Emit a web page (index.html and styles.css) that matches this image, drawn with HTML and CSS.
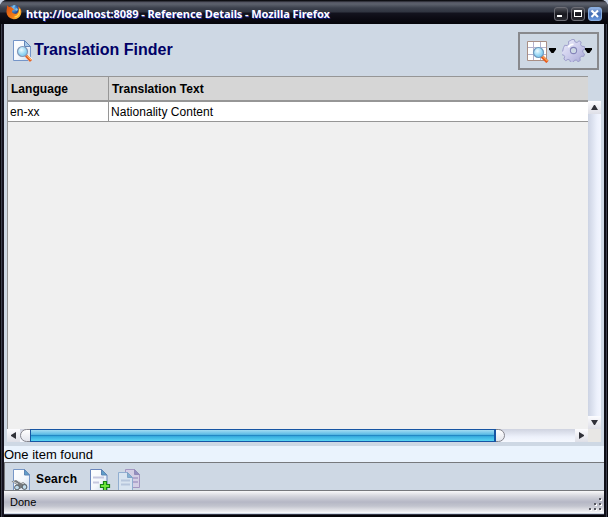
FILE: index.html
```html
<!DOCTYPE html>
<html lang="en">
<head>
<meta charset="utf-8">
<title>Reference Details</title>
<link rel="stylesheet" href="styles.css">
</head>
<body>
<svg class="defs" width="0" height="0" aria-hidden="true">
  <defs>
    <linearGradient id="paper" x1="0" y1="0" x2="1" y2="1"><stop offset="0" stop-color="#fff"/><stop offset=".55" stop-color="#f4f7fc"/><stop offset="1" stop-color="#c9d9ee"/></linearGradient>
    <linearGradient id="gear" x1="0" y1="0" x2="1" y2="1"><stop offset="0" stop-color="#f0f0fc"/><stop offset=".5" stop-color="#cdcdec"/><stop offset="1" stop-color="#a6a6d4"/></linearGradient>
    <radialGradient id="lens" cx=".4" cy=".35"><stop offset="0" stop-color="#f0fcff"/><stop offset="1" stop-color="#8ad2f4"/></radialGradient>
    <radialGradient id="globe" cx=".4" cy=".3"><stop offset="0" stop-color="#7cc4f4"/><stop offset="1" stop-color="#123c8c"/></radialGradient>
    <linearGradient id="fox" x1="0" y1="0" x2="1" y2="1"><stop offset="0" stop-color="#d84c10"/><stop offset=".6" stop-color="#f07c18"/><stop offset="1" stop-color="#ffd840"/></linearGradient>
  </defs>
</svg>
<div class="window">
  <header class="titlebar">
    <svg class="firefox" viewBox="0 0 16 16">
      <circle cx="8.3" cy="7" r="6" fill="url(#globe)"/>
      <path d="M7 1.5 9.5 1 8.5 3 6.5 4ZM10 4l2 1-1 2-2-1Z" fill="#7cc0e8"/>
      <path d="M1 1.200 3 3 5 2.700 6.300 4 8.400 5.200 6.200 6.500 6 8.100C7 10 9.500 10.400 11.300 9 13 7.400 13 4 11.800 2.300 15 4 16 7.400 15 10.200 13.700 13.800 10.700 15.400 7.600 15.200 3.200 14.800.5 11.500.5 7.800.5 5 1.300 3.800 1 1.200Z" fill="url(#fox)"/>
      <path d="M13.500 5C14.500 9 12 12.500 8.500 13" fill="none" stroke="#ffdc50" stroke-width="1.200"/>
    </svg>
    <h1 class="caption">http://localhost:8089 - Reference Details - Mozilla Firefox</h1>
    <div class="controls">
      <span class="control"><svg viewBox="0 0 14 14"><path d="M3 8h5v2H3z" fill="#fff"/></svg></span>
      <span class="control"><svg viewBox="0 0 14 14"><path d="M3 3h8v7H3zM4 5v4h6V5z" fill="#fff" fill-rule="evenodd"/></svg></span>
      <span class="control close"><svg viewBox="0 0 14 14"><path d="m3.500 3.500 6.500 6.500M10 3.500 3.500 10" stroke="#fff" stroke-width="2.100"/></svg></span>
    </div>
  </header>
  <main class="page">
    <section class="heading">
      <svg class="finder" viewBox="0 0 22 24">
        <path d="M1.500 1.500h11l6 6v14h-17Z" fill="url(#paper)" stroke="#7595c8"/>
        <path d="M12.500 1.500v6h6Z" fill="#a9cbe9" stroke="#6587b8"/>
        <path d="m14 16 5 5.500" stroke="#fff" stroke-width="4"/>
        <path d="m14 16.500 5 5.500" stroke="#e46428" stroke-width="3"/>
        <path d="m15 16.500 4 4.400" stroke="#ffd27c"/>
        <circle cx="10.500" cy="12.500" r="5" fill="url(#lens)" stroke="#8297b8" stroke-width="1.200"/>
      </svg>
      <h2 class="title">Translation Finder</h2>
      <div class="tools">
        <svg class="grid-icon" viewBox="0 0 22 22">
          <path d="M.5.500h19v19H.500Z" fill="#fff" stroke="#a98f85"/>
          <path d="M6.500 1v18M13.500 1v18M1 6.500h18M1 13.500h18" stroke="#b4b2cd"/>
          <path d="m14.500 15 6 6" stroke="#e85e20" stroke-width="3.200"/>
          <path d="m15.500 15 5 5" stroke="#ffd27c"/>
          <circle cx="11.500" cy="11.500" r="5" fill="url(#lens)" stroke="#6d99bd" stroke-width="1.200"/>
        </svg>
        <svg class="arrow" viewBox="0 0 7 5"><path d="M0 0h7v1.500L4.500 5h-2L0 1.500Z"/></svg>
        <svg class="gear-icon" viewBox="0 0 22 22">
          <path d="m9.500.5 2.200 0 .8 2.300 1.900.5 1.900-1.600 2 1.300-.5 2.400 1.200 1.600 2.400.2.600 2.300-2.100 1.300-.1 1.900 1.800 1.700-.8 2.200-2.500 0-1.200 1.500.4 2.400-2.100 1.200-1.800-1.600-1.900.4-1.200 2.200-2.200-.2-.8-2.300-1.800-.7-2.100 1.200-1.800-1.500.8-2.300-1.100-1.600-2.500-.4-.3-2.300 2.100-1.200.3-1.900L1.600 8l1-2 2.400.3 1.400-1.500-.2-2.400 2.100-1Z" fill="url(#gear)" stroke="#9393c4" stroke-width=".8"/>
          <circle cx="11" cy="11" r="3" fill="#cdd8e4" stroke="#8484b8"/>
          <path d="M6 8c1-2.200 3-3 5-3" fill="none" stroke="#fff" stroke-width="1.500"/>
        </svg>
        <svg class="arrow" viewBox="0 0 7 5"><path d="M0 0h7v1.500L4.500 5h-2L0 1.500Z"/></svg>
      </div>
    </section>
    <section class="results">
      <div class="listing">
        <div class="row head"><div class="cell">Language</div><div class="cell">Translation Text</div></div>
        <div class="row"><div class="cell">en-xx</div><div class="cell">Nationality Content</div></div>
      </div>
      <div class="vscroll">
        <span class="vbutton"><svg viewBox="0 0 7 5"><path d="M3 0h1l3 5H0Z"/></svg></span>
        <span class="vbutton"><svg viewBox="0 0 7 5"><path d="M0 0h7L4 5H3Z"/></svg></span>
      </div>
      <div class="hscroll">
        <span class="hbutton"><svg viewBox="0 0 5 7"><path d="M0 3v1l5 3V0Z"/></svg></span>
        <span class="thumb"><span class="fill"></span></span>
        <span class="hbutton end"><svg viewBox="0 0 5 7"><path d="M0 0v7l5-3V3Z"/></svg></span>
      </div>
      <div class="corner"></div>
    </section>
    <p class="count">One item found</p>
    <nav class="actions">
      <svg class="search-icon" viewBox="0 0 22 22">
        <path d="M2.500.5h11l5 5.500v15.500h-16Z" fill="url(#paper)" stroke="#7797c8"/>
        <path d="M13.500.5V6h5Z" fill="#5f9fc9" stroke="#5d83b4"/>
        <path d="M.5 12.500 5 11l5 3 2-1 4 3-1 4-4-1-3 1-2-4Z" fill="#777b7e"/>
        <path d="m2 12.500 5 2.500M7 12l6 3" stroke="#d9dcdf"/>
        <circle cx="6" cy="18.500" r="2.400" fill="#c0dced" stroke="#555b60"/>
        <circle cx="13.500" cy="18" r="2.400" fill="#c0dced" stroke="#555b60"/>
      </svg>
      <span class="search">Search</span>
      <svg class="add-icon" viewBox="0 0 22 22">
        <path d="M1.500.5h11l5.500 5.500v15.500H1.500Z" fill="url(#paper)" stroke="#6985bc"/>
        <path d="M12.500.5V6h5.500Z" fill="#5f9fc9" stroke="#5d83b4"/>
        <path d="M4 8.500h11M4 13.500h6" stroke="#c6c8df" stroke-width="2"/>
        <path d="M14.500 12.500h3v3h3v3h-3v3h-3v-3h-3v-3h3Z" fill="#6ee83c" stroke="#168216" stroke-width="1.200"/>
      </svg>
      <svg class="copy-icon" viewBox="0 0 23 22">
        <g opacity=".75"><path d="M7.500.5h9l5 5v13h-14Z" fill="#d6cce6" stroke="#9681b7"/><path d="M16.500.5v5h5Z" fill="#7d78b4" stroke="#8172ab"/><path d="M15 9h5m-5 4h5" stroke="#a897c6" stroke-width="2"/></g>
        <path d="M.5 3.500h9l5 5v13H.5Z" fill="#d8e4f0" stroke="#91aed0"/><path d="M9.500 3.500v5h5Z" fill="#84b2d2" stroke="#80a4c8"/><path d="M3 11.500h9M3 15.500h9" stroke="#b6c6dc" stroke-width="2"/>
      </svg>
    </nav>
    <footer class="status"><span>Done</span>
      <svg class="grip" viewBox="0 0 14 14"><path d="M12 2h2v2h-2zM7 7h2v2H7zM12 7h2v2h-2zM2 12h2v2H2zM7 12h2v2H7zM12 12h2v2h-2z" fill="#fff"/><path d="M11 1h2v2h-2zM6 6h2v2H6zM11 6h2v2h-2zM1 11h2v2H1zM6 11h2v2H6zM11 11h2v2h-2z" fill="#55565f"/></svg>
    </footer>
  </main>
</div>
</body>
</html>
```
FILE: styles.css
```css
* { box-sizing: border-box; }
body { margin: 0; background: #c3cee0; font-family: "Liberation Sans", Arial, sans-serif; color: #000; overflow: hidden; }
h1, h2, p { margin: 0; }
svg { display: block; flex: none; }
.defs { position: absolute; }
.window { width: 608px; height: 517px; display: grid; grid-template-rows: 24px 1fr; padding: 0 4px 3px; border-radius: 7px 7px 0 0; background: linear-gradient(90deg, #050509 0 1px, #3c3e4c 1px 2px, #15131f 2px 4px, transparent 4px calc(100% - 4px), #101018 calc(100% - 4px) calc(100% - 2px), #3c3e4c calc(100% - 2px) calc(100% - 1px), #050509 calc(100% - 1px)), linear-gradient(#12121c 514px, #343545 514px 515px, #050509 515px); }
.titlebar { display: flex; margin: 0 -4px; padding: 0 6px; border-radius: 7px 7px 0 0; background: linear-gradient(#08080c 0, #15161b 1px, #50525f 2px, #5d626d 4px, #3c414d 8px, #303440 12px, #13131e 13px, #0c0b14 18px, #05050a 24px); }
.firefox { width: 16px; height: 16px; margin-top: 4px; }
.caption { margin: 6px 0 0 4px; flex: 1; font: bold 11px/16px "Noto Sans", sans-serif; letter-spacing: -.08px; color: #fff; text-shadow: 1px 1px #1624a0; white-space: nowrap; }
.controls { display: flex; gap: 3px; margin: 7px 0 0; }
.control { width: 14px; height: 14px; border: 1px solid #6c6c74; border-radius: 3px; background: linear-gradient(#50525a, #18181f 50%, #292930); }
.control svg { width: 14px; height: 14px; margin: -1px; }
.close { border-color: #8aaee0; background: linear-gradient(#94b4e4, #4069b0 50%, #6d9be0); }
.page { display: grid; grid-template-rows: 52px 370px 16px 29px 22px; min-width: 0; background: #ced8e4; }
.heading { display: flex; padding: 0 5px 0 8px; }
.finder { width: 22px; height: 24px; margin-top: 15px; }
.title { flex: 1; margin: 17px 0 0; color: #000066; font-size: 16px; line-height: 18px; letter-spacing: 0; }
.tools { display: flex; width: 81px; height: 38px; margin-top: 8px; padding-left: 7px; border: 2px solid #88898d; }
.grid-icon { width: 22px; height: 22px; margin: 7px 0 0; }
.gear-icon { width: 23px; height: 23px; margin: 5px 0 0 6px; }
.arrow { width: 7px; height: 5px; margin: 14px 0 0; }
.results { display: grid; grid-template: 353px 13px / 581px 13px; padding-left: 3px; }
.listing { grid-area: 1 / 1; background: #f0f0f0; border-left: 1px solid #969696; }
.row { display: grid; grid-template-columns: 100px 1fr; height: 20px; font-size: 12px; line-height: 20px; background: #fff; border-bottom: 1px solid #969696; }
.cell { padding-left: 2px; white-space: nowrap; letter-spacing: .04px; }
.cell + .cell { border-left: 1px solid #969696; }
.head { height: 26px; line-height: 24px; font-weight: bold; background: #d6d6d6; border-top: 1px solid #969696; border-bottom: 2px solid #969696; }
.head .cell { padding-left: 3px; }
.vscroll { grid-area: 1 / 2; margin-top: 25px; display: flex; flex-direction: column; justify-content: space-between; background: linear-gradient(90deg, #ccd3e3, #edf1fc 70%, #f3f6ff); }
.vbutton, .hbutton { display: flex; align-items: center; justify-content: center; width: 13px; height: 13px; background: linear-gradient(#fcfcff, #dedfe7); }
.vbutton svg { width: 7px; height: 5px; fill: #303139; }
.hscroll { grid-area: 2 / 1; display: flex; background: linear-gradient(#cfd3e0, #edf1fb 60%, #f6f9ff); }
.hbutton svg { width: 5px; height: 7px; fill: #303139; }
.end { margin-left: auto; }
.thumb { width: 485px; padding: 0 8px 0 9px; border: 1px solid #85858d; border-radius: 7px; background: linear-gradient(#fff, #e2e4ec); }
.fill { display: block; height: 13px; margin-top: -1px; border: 1px solid #1755a3; border-width: 1px 2px 1px 1px; background: linear-gradient(#a4dcf2, #5cbce6 40%, #2388c4 50%, #38aee0 60%, #59d5f3); }
.corner { grid-area: 2 / 2; background: #e8e7e5; }
.count { background: #eaf3fd; font-size: 13px; line-height: 17px; letter-spacing: 0; }
.actions { display: flex; border: 1px solid #77797d; border-right: 0; padding: 6px 0 0 6px; background: #ced8e4; overflow: hidden; }
.actions svg { width: 22px; height: 22px; }
.search { width: 46px; margin-left: 3px; font-weight: bold; font-size: 12px; line-height: 20px; letter-spacing: .2px; }
.actions .add-icon { margin-left: 7px; }
.actions .copy-icon { width: 23px; margin-left: 7px; }
.status { display: flex; justify-content: space-between; padding: 0 2px 0 6px; font-size: 11px; line-height: 22px; background: linear-gradient(#f9f9fa, #d5d6dd 5px, #b5b7c5 11px, #c2c4ce 15px, #f0f0f3 21px, #fff); }
.grip { width: 14px; height: 14px; margin-top: 6px; }
```
